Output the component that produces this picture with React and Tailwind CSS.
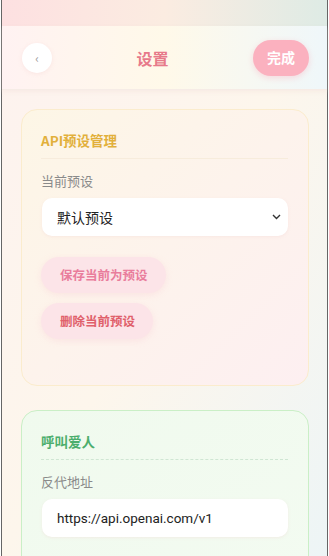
import React from "react";

const font = { fontFamily: '"Noto Sans CJK SC", sans-serif' };

const Card = ({ title, titleColor, tone, dashed, children }) => (
  <div
    className={`rounded-[16px] border pl-[19px] pr-[20px] pt-[20px] pb-[46px] ${
      tone === "green"
        ? "border-[#caefc6] bg-gradient-to-br from-[#f0faee] to-[#f3fbf1]"
        : "border-[#fbeccd] bg-gradient-to-br from-[#fdf6e6] via-[#fdf3ec] to-[#fdeff1]"
    }`}
  >
    <h2 className={`text-[13.5px] font-bold leading-[20px] pb-[8px] ${titleColor}`}>{title}</h2>
    <div
      className={
        dashed
          ? "border-t border-dashed border-[#cfe6d3]"
          : "border-t border-[#f7ecdc]"
      }
    />
    {children}
  </div>
);

const Field = ({ label, children }) => (
  <div className="mt-[12px]">
    <div className="text-[13px] leading-[20px] text-[#8a8a8a]">{label}</div>
    <div className="mt-[7px] ml-[1px] flex h-[38px] items-center justify-between rounded-[10px] bg-white px-[15px] shadow-[0_1px_3px_rgba(240,200,200,0.25)]">
      {children}
    </div>
  </div>
);

export default function App() {
  return (
    <div className="h-[556px] w-[329px] overflow-hidden bg-white" style={font}>
      <div className="ml-[1px] flex h-full w-[327px] flex-col border-x border-[#666] bg-gradient-to-br from-[#fdf2ef] via-[#fdf6ec] to-[#edf5f6]">
        <div className="h-[26px] shrink-0 bg-gradient-to-r from-[#fde0e1] via-[#fbece1] to-[#deebe5]" />
        <div className="flex h-[64px] shrink-0 items-center justify-between border-b border-[#f6ece6] bg-gradient-to-r from-[#fff2f2] via-[#fff9e9] to-[#eff7fa] pl-[20px] pr-[18px] shadow-[0_2px_4px_rgba(240,220,215,0.35)]">
          <button className="flex h-[30px] w-[30px] items-center justify-center rounded-full bg-white text-[12px] text-[#999] shadow-[0_1px_4px_rgba(240,200,200,0.3)]">
            ‹
          </button>
          <h1 className="text-[16px] font-bold text-[#e77a8a]">设置</h1>
          <button className="h-[36px] w-[56px] rounded-full bg-[#fbb1bf] text-[14px] font-bold text-white shadow-[0_2px_6px_rgba(250,170,185,0.4)]">
            完成
          </button>
        </div>

        <div className="flex flex-col gap-[24px] pl-[19px] pr-[18px] pt-[19px]">
          <Card title="API预设管理" titleColor="text-[#e2b03b]">
            <Field label="当前预设">
              <span className="text-[14px] text-[#222]">默认预设</span>
              <svg width="9" height="6" viewBox="0 0 9 6" className="mr-[-8px]">
                <path d="M1 1l3.5 3.5L8 1" fill="none" stroke="#333" strokeWidth="1.4" />
              </svg>
            </Field>
            <div className="mt-[21px] flex flex-col items-start gap-[10px]">
              <button className="h-[36px] rounded-full bg-[#fce4e8] pl-[19px] pr-[18px] text-[12.5px] font-bold text-[#e97d9c] shadow-[0_2px_6px_rgba(250,200,210,0.35)]">
                保存当前为预设
              </button>
              <button className="h-[36px] rounded-full bg-[#fce4e8] pl-[19px] pr-[18px] text-[12.5px] font-bold text-[#e0606b] shadow-[0_2px_6px_rgba(250,200,210,0.35)]">
                删除当前预设
              </button>
            </div>
          </Card>

          <Card title="呼叫爱人" titleColor="text-[#4cae6d]" tone="green" dashed>
            <Field label="反代地址">
              <span className="text-[13.5px] text-[#222]" style={{ fontFamily: 'Roboto, "Noto Sans CJK SC", sans-serif' }}>
                https://api.openai.com/v1
              </span>
            </Field>
          </Card>
        </div>
      </div>
    </div>
  );
}
